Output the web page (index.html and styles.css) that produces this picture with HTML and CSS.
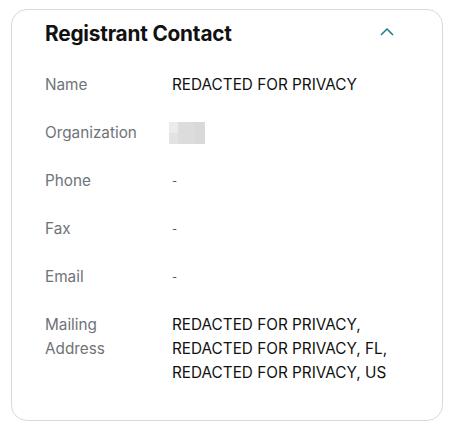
FILE: index.html
```html
<!DOCTYPE html>
<html>
<head>
<meta charset="utf-8">
<link rel="stylesheet" href="styles.css">
</head>
<body>
<div class="card">
  <div class="header">
    <h2 class="title">Registrant Contact</h2>
    <svg class="chev" width="16" height="10" viewBox="0 0 16 10"><path d="M2 8 L8 2 L14 8" fill="none" stroke="#1a7b83" stroke-width="1.5"/></svg>
  </div>
  <dl class="rows">
    <div class="row"><dt>Name</dt><dd>REDACTED FOR PRIVACY</dd></div>
    <div class="row"><dt>Organization</dt><dd><span class="blur"><i class="b1"></i><i class="b2"></i><i class="b3"></i></span></dd></div>
    <div class="row"><dt>Phone</dt><dd class="dash">-</dd></div>
    <div class="row"><dt>Fax</dt><dd class="dash">-</dd></div>
    <div class="row"><dt>Email</dt><dd class="dash">-</dd></div>
    <div class="row"><dt>Mailing<br>Address</dt><dd>REDACTED FOR PRIVACY,<br>REDACTED FOR PRIVACY, FL,<br>REDACTED FOR PRIVACY, US</dd></div>
  </dl>
</div>
</body>
</html>
```
FILE: styles.css
```css
html, body { margin: 0; padding: 0; background: #fff; }
body { padding: 9px 12px 0 11px; font-family: Inter, "Noto Sans", sans-serif; }
.card {
  border: 1px solid #d6d9dd;
  border-radius: 16px;
  height: 412px;
  box-sizing: border-box;
  padding: 0 32px 0 33px;
}
.header { display: flex; align-items: center; justify-content: space-between; height: 46px; margin-top: 0; }
.title { margin: 0; font-size: 20.8px; font-weight: 700; color: #111; letter-spacing: -0.2px; }
.chev { margin-right: 15px; margin-top: -3px; }
.rows { margin: 17px 0 0 0; display: flex; flex-direction: column; gap: 24px; }
.row { display: flex; font-size: 15.3px; line-height: 24px; }
dt { width: 127px; color: #6f7378; flex: none; }
dd { margin: 0; color: #111; }
.dash { color: #555; font-size: 11px; }
.blur { display: inline-flex; height: 22px; vertical-align: middle; margin-left: -3px; margin-top: -2px; }
.blur i { display: block; height: 100%; }
.b1 { width: 9px; background: linear-gradient(#ebebeb 0 50%, #e2e2e2 50%); }
.b2 { width: 17px; background: #dcdcdc; }
.b3 { width: 10px; background: #d9d9d9; }
```
